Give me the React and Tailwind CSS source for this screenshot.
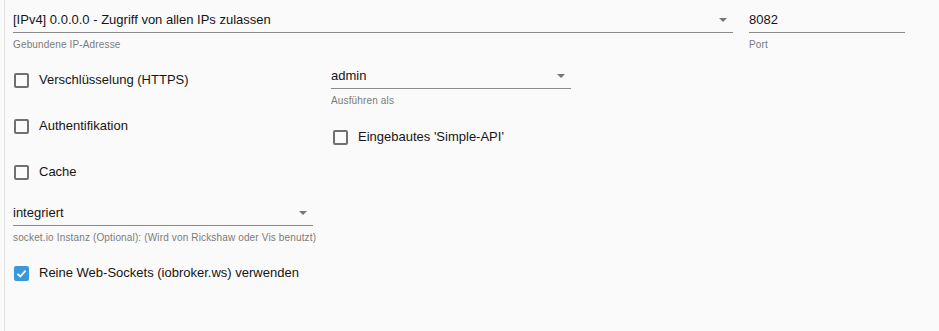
import React from "react";

const font = { fontFamily: "'Liberation Sans', Arial, sans-serif" };

function Arrow() {
  return (
    <svg width="8" height="4" viewBox="0 0 8 4" className="shrink-0">
      <path d="M0 0 L8 0 L4 4 Z" fill="#757575" />
    </svg>
  );
}

function Select({ value, helper, width }) {
  return (
    <div className={width}>
      <div className="h-[25px] flex items-center justify-between border-b border-[#8a8a8a] pr-[6px]">
        <span className="text-[13px] text-[#151515] leading-none -mt-[1px]">{value}</span>
        <Arrow />
      </div>
      {helper && (
        <div className="mt-[4px] h-[14px] flex items-center text-[10px] tracking-[0.15px] text-[#7a7a7a] whitespace-nowrap">
          {helper}
        </div>
      )}
    </div>
  );
}

function Check({ label, checked }) {
  return (
    <div className="flex items-center h-[46px]">
      {checked ? (
        <div className="w-[15px] h-[15px] rounded-[2px] bg-[#3a9ad9] flex items-center justify-center">
          <svg width="11" height="11" viewBox="0 0 11 11">
            <path d="M1.5 5.8 L4.3 8.5 L9.6 2.6" stroke="#fff" strokeWidth="1.8" fill="none" />
          </svg>
        </div>
      ) : (
        <div className="w-[15px] h-[15px] rounded-[2px] border-2 border-[#707070]" />
      )}
      <span className="ml-[10px] text-[13px] text-[#151515]">{label}</span>
    </div>
  );
}

export default function App() {
  return (
    <div className="w-[939px] h-[331px] bg-[#fafafa] overflow-hidden" style={font}>
      <div className="ml-[4px] h-full border-l border-[#e3e3e3] pl-[8px] pt-[8px]">
        <div className="flex gap-[16px]">
          <Select
            value="[IPv4] 0.0.0.0 - Zugriff von allen IPs zulassen"
            helper="Gebundene IP-Adresse"
            width="w-[720px]"
          />
          <div className="w-[156px]">
            <div className="h-[25px] flex items-center border-b border-[#8a8a8a]">
              <span className="text-[13px] text-[#151515] leading-none -mt-[1px]">8082</span>
            </div>
            <div className="mt-[4px] h-[14px] flex items-center text-[10px] tracking-[0.15px] text-[#7a7a7a]">Port</div>
          </div>
        </div>
        <div className="flex mt-[6px]">
          <div className="w-[318px] pl-[1px]">
            <Check label="Verschlüsselung (HTTPS)" />
            <Check label="Authentifikation" />
            <Check label="Cache" />
          </div>
          <div className="pt-[7px]">
            <Select value="admin" helper="Ausführen als" width="w-[240px]" />
            <div className="mt-[7px] pl-[2px]">
              <Check label="Eingebautes 'Simple-API'" />
            </div>
          </div>
        </div>
        <div className="mt-[6px]">
          <Select
            value="integriert"
            helper="socket.io Instanz (Optional): (Wird von Rickshaw oder Vis benutzt)"
            width="w-[300px]"
          />
        </div>
        <div className="mt-[6px] pl-[1px]">
          <Check label="Reine Web-Sockets (iobroker.ws) verwenden" checked />
        </div>
      </div>
    </div>
  );
}
